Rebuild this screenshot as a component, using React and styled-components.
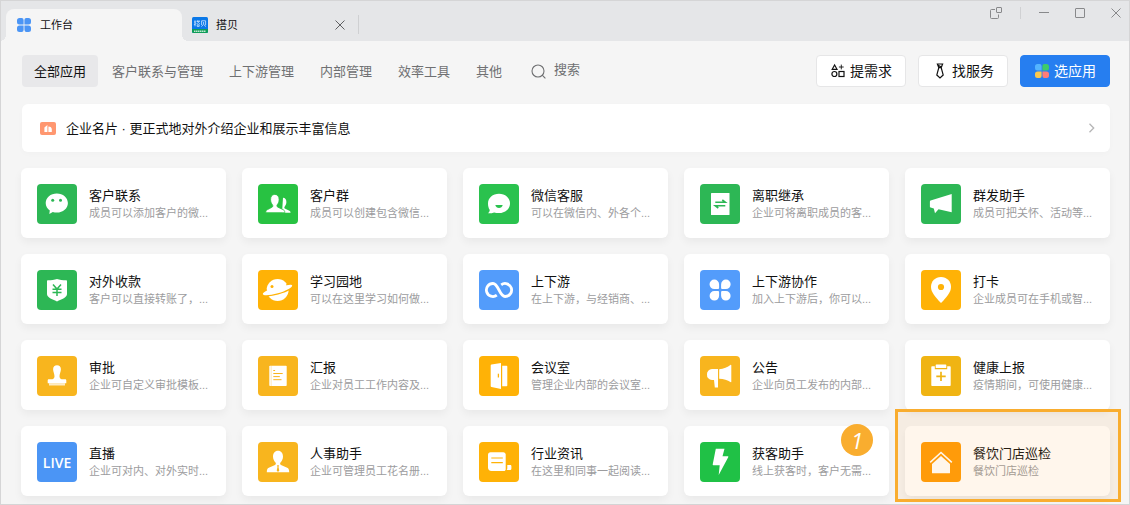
// -----------------------------------------------------------------------------

import React, {useState} from 'react';
import styled, {createGlobalStyle} from 'styled-components';
// -----------------------------------------------------------------------------

const pageGray = '#f5f5f5';
const barGray = '#e5e6e8';
const edgeGray = '#d5d5d6';
const primaryBlue = '#267ef0';
const orange = '#f9ad2f';
const green = '#2db755';
const amber = '#f8b51e';
const yellow = '#ffb206';
const skyBlue = '#539cfb';

const GlobalStyle = createGlobalStyle`
  * {
    box-sizing: border-box;
  }

  body {
    margin: 0;
    background: ${pageGray};
    font-family: 'Liberation Sans', 'Noto Sans CJK SC', sans-serif;
    font-size: 13px;
    color: #111;
  }

  button, input {
    margin: 0;
    padding: 0;
    border: none;
    background: none;
    font: inherit;
    color: inherit;
  }

  button {
    cursor: pointer;
  }

  svg {
    display: block;
    flex: none;
  }
`;

const Window = styled.div`
  min-height: 100vh;
  border: 1px solid ${edgeGray};
  background: ${pageGray};
`;

const TabBar = styled.header`
  display: flex;
  height: 40px;
  padding-left: 5px;
  background: ${barGray};
`;

const Tab = styled.div`
  position: relative;
  display: flex;
  align-items: center;
  width: 176px;
  margin-top: 8px;
  padding: 0 13px 0 10px;
  border-radius: 8px 8px 0 0;
  background: ${props => (props.$active ? pageGray : 'transparent')};

  &::before,
  &::after {
    content: '';
    display: ${props => (props.$active ? 'block' : 'none')};
    position: absolute;
    bottom: 0;
    width: 6px;
    height: 6px;
  }

  &::before {
    left: -6px;
    background: radial-gradient(circle at 0 0, transparent 6px, ${pageGray} 6px);
  }

  &::after {
    right: -6px;
    background: radial-gradient(circle at 100% 0, transparent 6px, ${pageGray} 6px);
  }
`;

const TabButton = styled.button`
  display: flex;
  align-items: center;
  flex: 1;
  gap: 8px;
  height: 100%;
  font-size: 11px;
`;

const Label = styled.span`
  padding-bottom: 2px;
`;

const TabDivider = styled.div`
  width: 1px;
  height: 19px;
  margin-top: 14px;
  background: #cfd0d2;
`;

const Controls = styled.div`
  display: flex;
  align-items: center;
  height: 24px;
  margin-left: auto;
  padding-right: 8px;
  gap: 18px;
  color: #88898b;
`;

const WindowButtons = styled.div`
  display: flex;
  align-items: center;
  gap: 26px;
`;

const ControlDivider = styled.div`
  width: 1px;
  height: 12px;
  background: #d0d1d3;
`;

const IconButton = styled.button`
  display: flex;
  color: ${props => props.color || 'inherit'};
`;

const Main = styled.main`
  padding: 14px 19px 8px 20px;
`;

const Toolbar = styled.div`
  display: flex;
  flex-wrap: wrap;
  align-items: center;
  gap: 12px;
  margin-left: 1px;
`;

const Nav = styled.nav`
  display: flex;
  gap: 2px;
`;

const NavItem = styled.button`
  height: 32px;
  padding: 0 12px 2px;
  border-radius: 4px;
  white-space: nowrap;
  background: ${props => (props.$active ? '#e8e8ea' : 'transparent')};
  color: ${props => (props.$active ? '#111' : '#6f7072')};
`;

const Search = styled.label`
  display: flex;
  align-items: center;
  flex: 1;
  gap: 8px;
  min-width: 60px;
  margin-left: 5px;
  color: #6f7072;

  input {
    width: 100%;
    min-width: 0;
    padding-bottom: 3px;
    outline: none;
  }

  input::placeholder {
    color: #6f7072;
    opacity: 1;
  }
`;

const Action = styled.button`
  display: flex;
  align-items: center;
  justify-content: center;
  gap: 4px;
  width: 90px;
  height: 32px;
  border: 1px solid ${props => (props.$primary ? primaryBlue : '#e6e6e7')};
  border-radius: 4px;
  background: ${props => (props.$primary ? primaryBlue : '#fff')};
  color: ${props => (props.$primary ? '#fff' : '#111')};
  font-size: 14px;
`;

const Banner = styled.a`
  display: flex;
  align-items: center;
  gap: 10px;
  height: 48px;
  margin: 17px 0 16px 1px;
  padding: 0 15px 0 18px;
  border-radius: 6px;
  background: #fff;
  box-shadow: 0 2px 6px rgba(0, 0, 0, 0.02);
  color: inherit;
  text-decoration: none;

  svg:last-child {
    margin-left: auto;
  }
`;

const Grid = styled.div`
  display: grid;
  grid-template-columns: repeat(5, minmax(0, 1fr));
  gap: 16px;
`;

const Cell = styled.div`
  position: relative;
`;

const Card = styled.a`
  display: flex;
  gap: 12px;
  height: 70px;
  padding: 16px;
  border-radius: 6px;
  background: #fff;
  box-shadow: 0 4px 8px rgba(0, 0, 0, 0.05);
  color: inherit;
  text-decoration: none;
`;

const Tile = styled.div`
  display: flex;
  align-items: center;
  justify-content: center;
  flex: none;
  width: 40px;
  height: 40px;
  border-radius: 4px;
  background: ${props => props.color};
  color: #fff;
  font-family: 'Open Sans', sans-serif;
  font-size: 14px;
  font-weight: 600;
`;

const CardText = styled.div`
  min-width: 0;
  padding-top: 3px;
  white-space: nowrap;
`;

const CardTitle = styled.div`
  line-height: 18px;
`;

const CardDesc = styled.div`
  overflow: hidden;
  font-size: 11px;
  line-height: 16px;
  color: #9c9c9e;
`;

const Highlight = styled.div`
  position: absolute;
  top: -17px;
  right: -11px;
  bottom: -6px;
  left: -10px;
  border: 3px solid ${orange};
  background: rgba(255, 160, 40, 0.09);
  pointer-events: none;
`;

const Step = styled.div`
  position: absolute;
  top: -2px;
  right: 16px;
  display: flex;
  align-items: center;
  justify-content: center;
  width: 32px;
  height: 32px;
  border-radius: 50%;
  background: ${orange};
  color: #fff;
  font-family: 'Open Sans', sans-serif;
  font-size: 22px;
  font-style: italic;
`;

// -----------------------------------------------------------------------------

const Four = ({colors}) => (
  <svg width="16" height="16" viewBox="-1 -1 16 16">
    <path fill={colors[0]} d="M2.5 0h2A2 2 0 0 1 6.6 2v4.6H2.5A2.5 2.5 0 0 1 0 4.1V2.5A2.5 2.5 0 0 1 2.5 0z" />
    <path fill={colors[1]} d="M9.5 0h2A2.5 2.5 0 0 1 14 2.5v1.6a2.5 2.5 0 0 1-2.5 2.5H7.4V2A2 2 0 0 1 9.5 0z" />
    <path fill={colors[2]} d="M2.5 7.4h4.1V12a2 2 0 0 1-2 2H2.5A2.5 2.5 0 0 1 0 11.5V9.9a2.5 2.5 0 0 1 2.5-2.5z" />
    <path fill={colors[3]} d="M7.4 7.4h4.1A2.5 2.5 0 0 1 14 9.9v1.6a2.5 2.5 0 0 1-2.5 2.5h-2a2 2 0 0 1-2-2z" />
  </svg>
);

const DabeiLogo = () => (
  <svg width="16" height="16" viewBox="0 0 16 16">
    <rect width="16" height="16" rx="1.5" fill="#0a78e8" />
    <path d="M0 12h16v2.5a1.5 1.5 0 0 1-1.5 1.5h-13A1.5 1.5 0 0 1 0 14.5z" fill="#0f9d58" />
    <g fill="none" stroke="#d3e8ff" strokeWidth="0.8">
      <path d="M2 5h2M3 3.3v6M1.9 7.6l2-.8M4.6 4.3h3.2M5.4 3.4v1.6M7 3.4v1.6M6.2 5.4L4.6 7M6.2 5.4L7.9 7M5.2 7.8h2v1.6h-2z" />
      <path d="M9.6 8V3.8h4V8M11.6 5v2.2L9.4 9.6M12 7.8l2 1.8" />
    </g>
    <path d="M2 14.3h12" stroke="#bfe8cf" strokeWidth="1.4" strokeDasharray="1.5 0.5" />
  </svg>
);

const Cross = ({size}) => (
  <svg width={size} height={size} viewBox="0 0 10 10" fill="none" stroke="currentColor" strokeWidth="1">
    <path d="M0.5 0.5l9 9M9.5 0.5l-9 9" />
  </svg>
);

const PopOut = () => (
  <svg width="12" height="12" viewBox="0 0 12 12" fill="none" stroke="currentColor">
    <path d="M5 2.5H1.5a1 1 0 0 0-1 1v7a1 1 0 0 0 1 1h6a1 1 0 0 0 1-1V7.5" />
    <rect x="6.5" y="0.5" width="5" height="5" rx="0.5" />
  </svg>
);

const Minimize = () => (
  <svg width="10" height="10" viewBox="0 0 10 10" stroke="currentColor">
    <path d="M0 4.5h10" />
  </svg>
);

const Maximize = () => (
  <svg width="10" height="10" viewBox="0 0 10 10" fill="none" stroke="currentColor">
    <rect x="0.5" y="0.5" width="9" height="9" rx="0.5" />
  </svg>
);

const SearchIcon = () => (
  <svg width="15" height="15" viewBox="0 0 15 15" fill="none" stroke="currentColor" strokeWidth="1.1">
    <circle cx="7" cy="7" r="6" />
    <path d="M11.2 11.2l3.2 3.2" />
  </svg>
);

const Shapes = () => (
  <svg width="16" height="16" viewBox="-1 -1 16 16" fill="none" stroke="currentColor" strokeWidth="1.2">
    <path d="M3.6 1L6 5.3H1.2z" />
    <path d="M10.3 0.6v4.8M7.9 3h4.8" strokeWidth="0.9" />
    <circle cx="3.4" cy="10" r="2.5" />
    <rect x="8" y="7.5" width="5" height="5" />
  </svg>
);

const Tie = () => (
  <svg width="16" height="16" viewBox="0 0 16 16" fill="none" stroke="currentColor" strokeWidth="1.2">
    <path d="M5.4 1h5.2L9.2 4.6H6.8zM6.8 4.6L4.8 12 8 15l3.2-3-2-7.4M6.2 2.2l3.4 2" />
  </svg>
);

const CardIcon = () => (
  <svg width="16" height="13" viewBox="0 0 16 13">
    <rect width="16" height="13" rx="2" fill="#ff9770" />
    <path d="M4.4 10V5.6L7.4 3v7zM8.4 10V4.4c2.2 0 3.4 1.2 3.4 2.8V10z" fill="#fff" />
  </svg>
);

const Chevron = () => (
  <svg width="7" height="10" viewBox="0 0 7 10" fill="none" stroke="#b5b5b6" strokeWidth="1.3">
    <path d="M1.5 0.8L5.7 5 1.5 9.2" />
  </svg>
);

// -----------------------------------------------------------------------------
// white drawings on the 40px tiles, `c` is the tile color for the cut-outs

const drawings = {
  wechat: c => (
    <>
      <path d="M19.8 9.4c6.2 0 11.1 4.2 11.1 9.6s-4.9 9.6-11.1 9.6c-1.4 0-2.8-.2-4-.6l-3.5 2 .5-3.6c-2.5-1.8-4.1-4.4-4.1-7.4 0-5.4 4.9-9.6 11.1-9.6z" />
      <circle cx="15.7" cy="16.3" r="1.5" fill={c} />
      <circle cx="23.5" cy="16.3" r="1.5" fill={c} />
    </>
  ),
  group: c => (
    <>
      <path d="M25 13.8c2.2 0 3.4 1.8 3.4 4.2 0 2.2-1 3.6-1.8 4.7-.5.8-.2 1.6.7 2.1l4.1 2c.8.4 1.2 1 1.2 1.9H24z" />
      <path
        d="M16.8 10.4c2.9 0 4.3 2.2 4.3 5.2 0 2.4-.9 3.9-1.9 5.2-.6.9-.3 1.9.7 2.4l5.5 2.6c1 .5 1.4 1.3 1.4 2.9H7.8c0-1.6.4-2.4 1.4-2.9l4.7-2.5c1-.5 1.2-1.5.6-2.4-1-1.3-1.9-2.9-1.9-5.3 0-3 1.300-5.200 4.200-5.200z"
        stroke={c}
        strokeWidth="0.8"
      />
    </>
  ),
  chat: c => (
    <>
      <path d="M20 9.7c6.2 0 11 4.2 11 9.7S26.2 29 20 29c-1.700 0-3.400-.3-4.900-.6-1.700.7-3.700 1-6 .9 1-1 1.600-2.100 1.700-3.300C9.600 24.200 9 22 9 19.400c0-5.500 4.800-9.700 11-9.700z" />
      <path d="M16.300 21h7.400c-.4 2-1.900 3-3.700 3s-3.300-1-3.700-3z" fill={c} />
    </>
  ),
  transfer: c => (
    <>
      <rect x="11" y="9" width="18.5" height="22" rx="0.5" />
      <path d="M15.3 18.300h10l-3-2.300M25.300 21.700h-10l3 2.300" fill="none" stroke={c} strokeWidth="1.6" />
    </>
  ),
  horn: () => (
    <path d="M30.7 10v18.300l-13.200-3.100-3.500 4.100-1.200-4.900-3.200-.8a.8.800 0 0 1-.7-.8v-5.300c0-.5.300-.9.700-1z" />
  ),
  shield: c => (
    <>
      <path d="M20 9c2.400 1 5.900 1.200 9 1.200.6 0 1 .4 1 1V24c0 3.500-5 5-10 7.500-5-2.500-10-4-10-7.500V11.200c0-.6.4-1 1-1 3.100 0 6.600-.2 9-1.200z" />
      <path d="M16 14.500l4 4.500 4-4.500M20 19v7M15.500 19.200h9M15.500 22.500h9" fill="none" stroke={c} strokeWidth="1.5" />
    </>
  ),
  planet: c => (
    <>
      <circle cx="19.6" cy="20" r="11" />
      <path
        d="M28.500 15.300c3.300-.9 5.600-.8 5.700.2.300 2-6.300 5.500-14.300 7.800-8 2.200-14.800 2.600-15.100.7-.1-.8 1.500-2.100 4.200-3.500"
        fill="none"
        stroke={c}
        strokeWidth="2.600"
      />
      <path d="M28.500 15.300c3.300-.9 5.600-.8 5.700.2.300 2-6.300 5.500-14.300 7.800-8 2.200-14.800 2.600-15.100.7-.1-.8 1.500-2.100 4.200-3.500l1.200.5 18-4.700z" />
      <circle cx="14" cy="16.500" r="1.500" fill={c} />
    </>
  ),
  loop: () => (
    <path
      d="M17.800 25.200A6.500 6.500 0 1 1 14 13.500c5.500 0 6.500 13 12 13a6.500 6.500 0 1 0-3.800-11.700"
      fill="none"
      stroke="#fff"
      strokeWidth="2.800"
    />
  ),
  petals: () => (
    <path d="M14.300 9.600a4.800 4.800 0 0 1 4.800 4.800v3.300c0 .9-.5 1.400-1.400 1.400h-3.400a4.750 4.750 0 0 1 0-9.500zM25.900 9.600a4.750 4.750 0 0 1 0 9.500h-3.400c-.9 0-1.400-.5-1.400-1.400v-3.300a4.800 4.800 0 0 1 4.800-4.800zM14.300 21.100h3.400c.9 0 1.400.5 1.400 1.400v3.300a4.750 4.750 0 1 1-4.800-4.700zM22.500 21.100h3.400a4.750 4.750 0 1 1-4.800 4.700v-3.300c0-.9.5-1.400 1.400-1.400z" />
  ),
  pin: c => (
    <>
      <path d="M20 7c5.800 0 10 4.300 10 9.900 0 5.200-4.400 10.300-10 16.100-5.600-5.800-10-10.900-10-16.100C10 11.300 14.200 7 20 7z" />
      <circle cx="20" cy="17" r="3.1" fill={c} />
    </>
  ),
  stamp: () => (
    <>
      <path d="M20 9.300c2.300 0 3.900 1.600 3.900 4 0 2.600-1.400 4.600-1.400 7 0 1.600.8 2.700 2 2.900h3.600c.8 0 1.200.4 1.200 1.200v2.800H10.700v-2.800c0-.8.4-1.200 1.200-1.200h3.600c1.200-.2 2-1.300 2-2.900 0-2.400-1.400-4.400-1.400-7 0-2.400 1.600-4 3.900-4z" />
      <path d="M12 27.200h16v2.300H12z" opacity="0.75" />
    </>
  ),
  report: c => (
    <>
      <rect x="11.3" y="9.7" width="17.4" height="20.3" rx="0.8" />
      <path d="M13.2 9.700v20.300" stroke={c} strokeWidth="0.3" />
      <path d="M15.3 14.500h1.800M15.300 17.500h9.400M15.300 20.600h6.500M15.300 23.700h8.200" stroke={c} strokeWidth="1" />
    </>
  ),
  door: c => (
    <>
      <path d="M12.500 8.600L22 6.900v26.200l-9.500-2.200c-.5-.1-.8-.5-.8-1V9.600c0-.5.300-.9.800-1zM23.200 9.700h4.300c.5 0 .8.300.8.800v19c0 .5-.3.800-.8.800h-4.300z" />
      <path d="M19.400 17.700v3.800" stroke={c} strokeWidth="1.3" />
    </>
  ),
  megaphone: () => (
    <>
      <path d="M12 13h6v18.500h-3.200L14 24h-2a5 5 0 0 1-5-5.500 5 5 0 0 1 5-5.500z" />
      <path d="M19.200 13.200c4.500-.4 8.500-2 11.200-4.300.4-.3.900-.1.900.4v16.400c0 .5-.5.700-.9.400-2.700-2-6.700-3.200-11.200-3.400z" />
    </>
  ),
  clipboard: c => (
    <>
      <path d="M11.300 10.300h2.500v3h12.400v-3h2.500c.6 0 1 .4 1 1V29c0 .6-.4 1-1 1H11.300c-.6 0-1-.4-1-1V11.300c0-.6.4-1 1-1z" />
      <rect x="14.7" y="8.4" width="10.6" height="3.7" rx="0.6" />
      <path d="M20 15.700v9.400M15.300 20.400h9.400" stroke={c} strokeWidth="1.7" />
    </>
  ),
  person: c => (
    <>
      <path d="M20 8.700c3.200 0 5 2.400 5 5.900 0 2.900-1.300 4.600-2.500 6-.7.900-.4 1.900.5 2.300l6.200 2.900c1.400.7 2 1.700 2 4.400H8.800c0-2.700.6-3.700 2-4.400l6.200-2.900c.9-.4 1.200-1.400.5-2.300-1.200-1.400-2.500-3.100-2.500-6 0-3.500 1.800-5.900 5-5.900z" />
      <path d="M19 23.300h2l-.5 1.700.8 3.400-1.300 1.500-1.300-1.500.8-3.400z" fill={c} />
    </>
  ),
  scroll: c => (
    <>
      <path d="M11.500 10.200h12.800c1.400 0 2.400 1 2.400 2.400v15.200l-1 1.200H12.500C10.300 29 9 27.700 9 25.500V12.700c0-1.500 1-2.500 2.500-2.500z" />
      <path d="M28.300 23h2.900c.8 0 1.200.4 1.200 1.200v2.200c0 1-.6 1.600-1.600 1.600h-3.200c.5-.5.700-1 .7-1.700z" />
      <path d="M12.300 16h11.500M12.300 20.600h11.500" stroke={c} strokeWidth="1.200" />
    </>
  ),
  bolt: () => (
    <path d="M15.800 6.700h8.700l-2 7.600h5.200c.6 0 .8.400.5.900L18.700 33l1-9.700h-6.300c-.5 0-.8-.3-.7-.8z" />
  ),
  house: () => (
    <>
      <path d="M20 14l9 8v8.700c0 .4-.2.600-.6.600H11.600c-.4 0-.6-.2-.6-.6V22z" />
      <path d="M9.200 20.300L20 10.500l10.800 9.800" fill="none" stroke="#fff" strokeWidth="1.6" />
    </>
  ),
};

const tabs = ['全部应用', '客户联系与管理', '上下游管理', '内部管理', '效率工具', '其他'];

const apps = [
  {title: '客户联系', desc: '成员可以添加客户的微...', icon: 'wechat', color: green},
  {title: '客户群', desc: '成员可以创建包含微信...', icon: 'group', color: '#28c242'},
  {title: '微信客服', desc: '可以在微信内、外各个...', icon: 'chat', color: '#2ac24e'},
  {title: '离职继承', desc: '企业可将离职成员的客...', icon: 'transfer', color: green},
  {title: '群发助手', desc: '成员可把关怀、活动等...', icon: 'horn', color: green},
  {title: '对外收款', desc: '客户可以直接转账了，...', icon: 'shield', color: green},
  {title: '学习园地', desc: '可以在这里学习如何做...', icon: 'planet', color: yellow},
  {title: '上下游', desc: '在上下游，与经销商、...', icon: 'loop', color: skyBlue},
  {title: '上下游协作', desc: '加入上下游后，你可以...', icon: 'petals', color: skyBlue},
  {title: '打卡', desc: '企业成员可在手机或智...', icon: 'pin', color: yellow},
  {title: '审批', desc: '企业可自定义审批模板...', icon: 'stamp', color: amber},
  {title: '汇报', desc: '企业对员工工作内容及...', icon: 'report', color: amber},
  {title: '会议室', desc: '管理企业内部的会议室...', icon: 'door', color: yellow},
  {title: '公告', desc: '企业向员工发布的内部...', icon: 'megaphone', color: amber},
  {title: '健康上报', desc: '疫情期间，可使用健康...', icon: 'clipboard', color: '#f0b413'},
  {title: '直播', desc: '企业可对内、对外实时...', label: 'LIVE', color: '#4b95f5'},
  {title: '人事助手', desc: '企业可管理员工花名册...', icon: 'person', color: amber},
  {title: '行业资讯', desc: '在这里和同事一起阅读...', icon: 'scroll', color: yellow},
  {title: '获客助手', desc: '线上获客时，客户无需...', icon: 'bolt', color: '#20c146', step: 1},
  {title: '餐饮门店巡检', desc: '餐饮门店巡检', icon: 'house', color: '#ff9c07', highlight: true},
];

// -----------------------------------------------------------------------------

const AppCard = ({app}) => (
  <Cell>
    <Card href="#">
      <Tile color={app.color}>
        {app.label}
        {app.icon && (
          <svg width="40" height="40" viewBox="0 0 40 40" fill="#fff">
            {drawings[app.icon](app.color)}
          </svg>
        )}
      </Tile>
      <CardText>
        <CardTitle>{app.title}</CardTitle>
        <CardDesc>{app.desc}</CardDesc>
      </CardText>
    </Card>
    {app.step && <Step>{app.step}</Step>}
    {app.highlight && <Highlight />}
  </Cell>
);

const App = () => {
  const [current, setCurrent] = useState(tabs[0]);

  return (
    <Window>
      <GlobalStyle />
      <TabBar>
        <Tab $active>
          <TabButton>
            <Four colors={['#4b95f5', '#4b95f5', '#4b95f5', '#4b95f5']} />
            <Label>工作台</Label>
          </TabButton>
        </Tab>
        <Tab>
          <TabButton>
            <DabeiLogo />
            <Label>搭贝</Label>
          </TabButton>
          <IconButton color="#5f6062" aria-label="关闭标签">
            <Cross size={10} />
          </IconButton>
        </Tab>
        <TabDivider />
        <Controls>
          <IconButton aria-label="弹出"><PopOut /></IconButton>
          <ControlDivider />
          <WindowButtons>
            <IconButton aria-label="最小化"><Minimize /></IconButton>
            <IconButton aria-label="最大化"><Maximize /></IconButton>
            <IconButton aria-label="关闭"><Cross size={10} /></IconButton>
          </WindowButtons>
        </Controls>
      </TabBar>
      <Main>
        <Toolbar>
          <Nav>
            {tabs.map(tab => (
              <NavItem key={tab} $active={tab === current} onClick={() => setCurrent(tab)}>
                {tab}
              </NavItem>
            ))}
          </Nav>
          <Search>
            <SearchIcon />
            <input type="text" placeholder="搜索" aria-label="搜索" />
          </Search>
          <Action>
            <Shapes />
            <Label>提需求</Label>
          </Action>
          <Action>
            <Tie />
            <Label>找服务</Label>
          </Action>
          <Action $primary>
            <Four colors={['#54b4ff', '#3ecb6b', '#fbc84e', '#ff7c78']} />
            <Label>选应用</Label>
          </Action>
        </Toolbar>
        <Banner href="#">
          <CardIcon />
          <Label>企业名片 · 更正式地对外介绍企业和展示丰富信息</Label>
          <Chevron />
        </Banner>
        <Grid>
          {apps.map(app => (
            <AppCard key={app.title} app={app} />
          ))}
        </Grid>
      </Main>
    </Window>
  );
};

export default App;
